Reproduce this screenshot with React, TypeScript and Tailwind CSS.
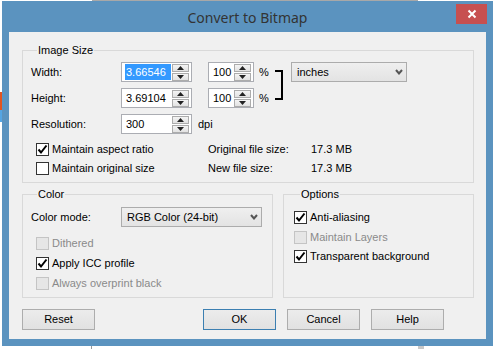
import React from "react";

function SpinArrows() {
  return (
    <div className="flex flex-col gap-[1px] mr-[2px]">
      {[0, 1].map((i) => (
        <div
          key={i}
          className="w-[17px] h-[8px] border border-[#acacac] bg-gradient-to-b from-[#f4f4f4] to-[#e2e2e2] flex items-center justify-center"
        >
          <svg width="7" height="4" viewBox="0 0 7 4" aria-hidden="true">
            {i === 0 ? (
              <polygon points="3.5,0 7,4 0,4" fill="#222" />
            ) : (
              <polygon points="0,0 7,0 3.5,4" fill="#222" />
            )}
          </svg>
        </div>
      ))}
    </div>
  );
}

function Spin({
  value,
  width,
  selected = false,
}: {
  value: string;
  width: string;
  selected?: boolean;
}) {
  return (
    <div
      className={`${width} h-[20px] border border-[#abadb3] bg-white flex items-center justify-between`}
    >
      <div className="flex-1 h-full flex items-center pl-[3px] pr-[1px] overflow-hidden">
        {selected ? (
          <span className="bg-[#3399ff] text-white h-[16px] flex items-center pl-[1px] w-full">
            {value}
          </span>
        ) : (
          <span className="pl-[1px]">{value}</span>
        )}
      </div>
      <SpinArrows />
    </div>
  );
}

function Select({ value, width }: { value: string; width: string }) {
  return (
    <div
      className={`${width} h-[20px] border border-[#acacac] bg-gradient-to-b from-[#efefef] to-[#e3e3e3] flex items-center justify-between pl-[5px] pr-[3px]`}
    >
      <span>{value}</span>
      <svg width="8" height="6" viewBox="0 0 8 6" aria-hidden="true">
        <polyline
          points="1,1 4,4.5 7,1"
          fill="none"
          stroke="#555"
          strokeWidth="2"
        />
      </svg>
    </div>
  );
}

function Check({
  label,
  checked = false,
  disabled = false,
}: {
  label: string;
  checked?: boolean;
  disabled?: boolean;
}) {
  return (
    <label className="flex items-center gap-[3px]">
      <span
        className={`w-[13px] h-[13px] border flex items-center justify-center ${
          disabled ? "border-[#c4c4c4] bg-[#e6e6e6]" : "border-[#333] bg-white"
        }`}
      >
        {checked && (
          <svg width="11" height="11" viewBox="0 0 11 11" aria-hidden="true">
            <polyline
              points="1.5,5.5 4,8.5 9.5,1.5"
              fill="none"
              stroke="#000"
              strokeWidth="2"
            />
          </svg>
        )}
      </span>
      <span className={disabled ? "text-[#8a8a8a]" : "text-black"}>{label}</span>
    </label>
  );
}

function Button({ label, primary = false }: { label: string; primary?: boolean }) {
  return (
    <button
      className={`w-[73px] h-[21px] border flex items-center justify-center bg-gradient-to-b from-[#ececec] to-[#e1e1e1] ${
        primary ? "border-[#3c7fb1]" : "border-[#adadad]"
      }`}
    >
      {label}
    </button>
  );
}

export default function App() {
  return (
    <div className="w-[493px] h-[349px] bg-white relative overflow-hidden font-['Liberation_Sans',Arial,sans-serif] text-[11px] leading-[13px] text-black">
      {/* bits of the desktop behind the dialog */}
      <div className="absolute top-0 left-[92px] w-[326px] h-[1px] bg-[#a8a8a8]" />
      <div className="absolute left-0 top-[92px] w-[2px] h-[18px] bg-[#e3541f]" />
      <div className="absolute left-0 top-[110px] w-[2px] h-[12px] bg-[#55a5e3]" />
      <div className="absolute bottom-0 left-[91px] w-[1px] h-[3px] bg-[#9a9a9a]" />
      <div className="absolute bottom-0 left-[418px] w-[6px] h-[3px] bg-[#c8c8c8]" />

      <div className="relative ml-[2px] mt-[1px] w-[491px] h-[345px] bg-[#5b93bf] flex flex-col px-[7px] pb-[7px]">
        <div className="h-[31px] flex items-center justify-center font-['Noto_Sans',sans-serif] text-[14px] text-[#333] pt-[1px]">
          Convert to Bitmap
        </div>
        <button className="absolute top-[3px] right-[6px] w-[31px] h-[20px] bg-[#c75050] flex items-center justify-center">
          <svg width="10" height="10" viewBox="0 0 10 10" aria-hidden="true">
            <path d="M1.5 1.5 L8.5 8.5 M8.5 1.5 L1.5 8.5" stroke="#fff" strokeWidth="2" />
          </svg>
        </button>

        <div className="flex-1 bg-[#f0f0f0] flex flex-col pt-[12px] pl-[13px] pr-[12px]">
          {/* Image Size */}
          <fieldset className="border border-[#d9d9d9] pl-[8px] pt-[5px] pb-[4px]">
            <legend className="ml-[6px] px-[1px]">Image Size</legend>
            <div className="grid grid-cols-[90px_71px_16px_46px_21px_16px_116px] grid-rows-[20px_20px_20px] gap-y-[6px] items-center">
              <span>Width:</span>
              <Spin value="3.66546" width="w-[71px]" selected />
              <span />
              <Spin value="100" width="w-[46px]" />
              <span className="pl-[5px]">%</span>
              <svg
                width="16"
                height="46"
                viewBox="0 0 16 46"
                className="row-span-2 self-start"
                aria-hidden="true"
              >
                <path d="M0 9 H7 V37 H0" fill="none" stroke="#000" strokeWidth="2" />
              </svg>
              <Select value="inches" width="w-[116px]" />

              <span>Height:</span>
              <Spin value="3.69104" width="w-[71px]" />
              <span />
              <Spin value="100" width="w-[46px]" />
              <span className="pl-[5px]">%</span>
              <span />

              <span>Resolution:</span>
              <Spin value="300" width="w-[71px]" />
              <span className="col-span-5 pl-[6px]">dpi</span>
            </div>
            <div className="mt-[6px] grid grid-cols-[177px_103px_1fr] grid-rows-[19px_19px] items-center">
              <div className="pl-[5px]">
                <Check label="Maintain aspect ratio" checked />
              </div>
              <span>Original file size:</span>
              <span>17.3 MB</span>
              <div className="pl-[5px]">
                <Check label="Maintain original size" />
              </div>
              <span>New file size:</span>
              <span>17.3 MB</span>
            </div>
          </fieldset>

          <div className="mt-[5px] flex gap-[10px]">
            {/* Color */}
            <fieldset className="w-[251px] border border-[#d9d9d9] pl-[8px] pt-[6px] pb-[4px]">
              <legend className="ml-[6px] px-[1px]">Color</legend>
              <div className="flex items-center h-[20px]">
                <span className="w-[90px]">Color mode:</span>
                <Select value="RGB Color (24-bit)" width="w-[141px]" />
              </div>
              <div className="mt-[6px] pl-[5px] flex flex-col">
                <div className="h-[20px] flex items-center">
                  <Check label="Dithered" disabled />
                </div>
                <div className="h-[20px] flex items-center">
                  <Check label="Apply ICC profile" checked />
                </div>
                <div className="h-[20px] flex items-center">
                  <Check label="Always overprint black" disabled />
                </div>
              </div>
            </fieldset>

            {/* Options */}
            <fieldset className="w-[191px] border border-[#d9d9d9] pl-[10px] pt-[6px] pb-[4px]">
              <legend className="ml-[6px] px-[1px]">Options</legend>
              <div className="flex flex-col">
                <div className="h-[20px] flex items-center">
                  <Check label="Anti-aliasing" checked />
                </div>
                <div className="h-[20px] flex items-center">
                  <Check label="Maintain Layers" disabled />
                </div>
                <div className="h-[19px] flex items-center">
                  <Check label="Transparent background" checked />
                </div>
              </div>
            </fieldset>
          </div>

          <div className="mt-[11px] flex">
            <Button label="Reset" />
            <div className="ml-[108px]">
              <Button label="OK" primary />
            </div>
            <div className="ml-[11px]">
              <Button label="Cancel" />
            </div>
            <div className="ml-[11px]">
              <Button label="Help" />
            </div>
          </div>
        </div>
      </div>
    </div>
  );
}
